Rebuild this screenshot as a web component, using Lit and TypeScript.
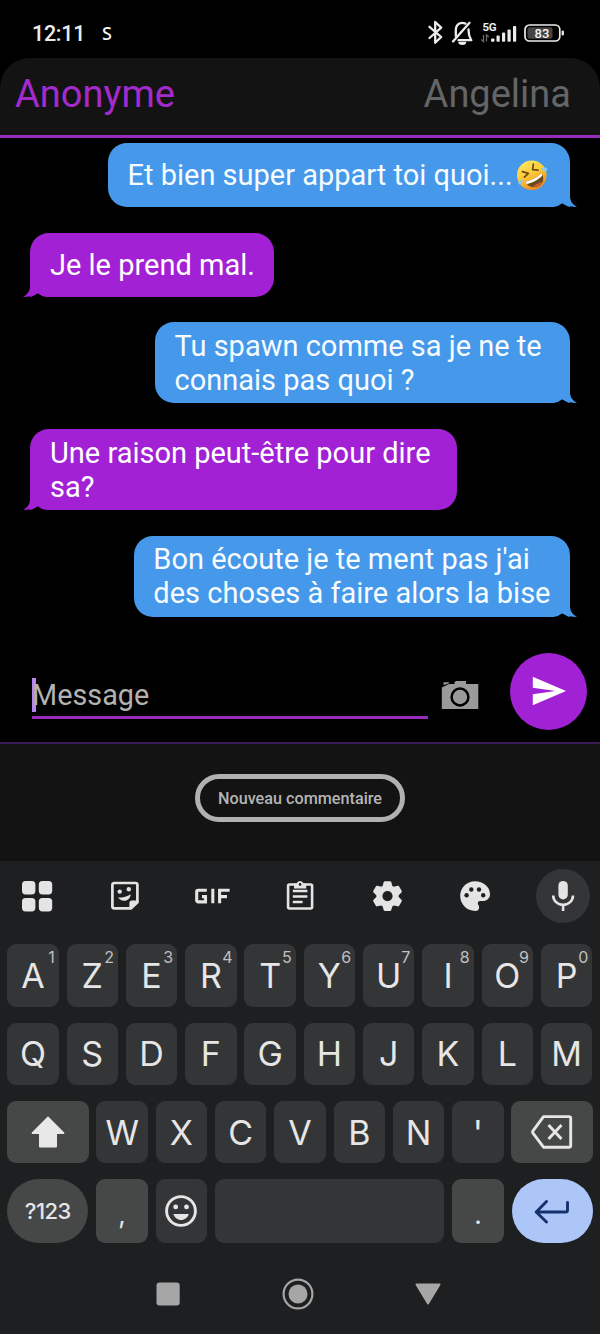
import { LitElement, html, css, svg, nothing } from "lit";
import { customElement, property } from "lit/decorators.js";

const emojiRofl = html`<svg class="emoji" viewBox="0 0 32 32" width="32" height="32" role="img" aria-label="rofl">
  <defs><linearGradient id="face" x1="0" y1="0" x2="0.5" y2="1">
    <stop offset="0" stop-color="#fff06a"/><stop offset="0.55" stop-color="#fcc938"/><stop offset="1" stop-color="#ef8e22"/>
  </linearGradient></defs>
  <circle cx="15.8" cy="16.2" r="14.8" fill="url(#face)"/>
  <path d="M6.4 12.6L12.4 14.4L8.4 18.2" fill="none" stroke="#6b4a12" stroke-width="1.7" stroke-linecap="round" stroke-linejoin="round"/>
  <path d="M17.4 5.2L16.6 10.6L22 11.2" fill="none" stroke="#6b4a12" stroke-width="1.7" stroke-linecap="round" stroke-linejoin="round"/>
  <path d="M9.6 22.8C15 21.8 22 17.6 25.4 14.2C29.2 19 27 25.6 21.6 27.6C16.4 29.4 11.2 27 9.6 22.8z" fill="#6b4a1c"/>
  <path d="M9.6 22.8C15 21.8 22 17.6 25.4 14.2C26 15.2 26.2 16.2 26.2 16.8C22.4 20.8 16.4 24 10.8 25C10.2 24.4 9.9 23.6 9.6 22.8z" fill="#fff"/>
  <path d="M17.4 28C18 26 23.4 23.4 26 23.6C24.8 26 21.4 28.2 17.4 28z" fill="#d8603a"/>
  <path d="M6.8 20.4C3.4 20.6 1.6 23 2.4 24.8C3.4 26.8 6.8 24.6 6.8 20.4z" fill="#8ccbee"/>
  <path d="M24.8 10C27.6 7.6 31 8.2 31.4 10.2C31.6 12.6 28 12.8 24.8 10z" fill="#8ccbee"/>
</svg>`;

@customElement("chat-bubble")
class ChatBubble extends LitElement {
  @property() side = "left";
  @property({ type: Number }) min = 0;
  @property({ type: Array }) lines: unknown[] = [];
  static styles = css`
    :host { display: flex; }
    :host([side="right"]) { justify-content: flex-end; }
    .bubble {
      position: relative; box-sizing: border-box; min-height: 64px; padding: 6.5px 19.5px 6.5px 20px;
      display: flex; flex-direction: column; justify-content: center;
      color: #fff; font: 29px/34px Roboto, sans-serif; white-space: nowrap;
    }
    .left { background: #a221d5; border-radius: 19px 19px 19px 0; }
    .right { background: #4598ea; border-radius: 19px 19px 0 19px; color: #f6fcff; padding-left: 19.5px; }
    .line { display: flex; align-items: center; height: 34px; }
    .tail { position: absolute; bottom: 0; width: 28px; height: 12px; }
    .right .tail { right: -7px; fill: #4598ea; }
    .left .tail { left: -7px; transform: scaleX(-1); fill: #a221d5; }
    .emoji { margin-left: 3px; }
  `;
  render() {
    return html`<div class="bubble ${this.side}" style="min-width:${this.min}px">
      ${this.lines.map((l) => html`<div class="line">${l}</div>`)}
      <svg class="tail" viewBox="0 0 28 12">
        <path d="M2 12.2Q9 12 13.3 8.3Q18 11.5 21.5 12.2z" fill="#000"/>
        <path d="M14 0H21V2.5Q22 9 28 12Q19.5 12 13.3 8.3z"/>
      </svg>
    </div>`;
  }
}

const toolIcons = [
  svg`<g fill="#e4e4e4"><rect x="7" y="7" width="13.4" height="13.4" rx="3.6"/><rect x="23.8" y="7" width="13.4" height="13.4" rx="3.6"/><rect x="7" y="24" width="13.4" height="13.4" rx="3.6"/><rect x="23.8" y="24" width="13.4" height="13.4" rx="3.6"/></g>`,
  svg`<path d="M34.4 28.2V10.8a1.8 1.8 0 0 0-1.8-1.8H11.2A1.8 1.8 0 0 0 9.4 10.8V32.6A1.8 1.8 0 0 0 11.2 34.4H28z" fill="none" stroke="#e4e4e4" stroke-width="2.7" stroke-linejoin="round"/>
      <path d="M26.4 35V29a2.5 2.5 0 0 1 2.5-2.5H35L35.5 28.5L28 35.5z" fill="#e4e4e4"/>
      <circle cx="16.7" cy="17.6" r="2.2" fill="#e4e4e4"/><circle cx="25.8" cy="15.3" r="2.2" fill="#e4e4e4"/>
      <path d="M15.2 23.6C19.4 23.8 24 22.7 27.7 20.2C27.2 27.8 17.8 28.6 15.2 23.6z" fill="#e4e4e4"/>`,
  svg`<path d="M16.8 16.2H8.2a1.5 1.5 0 0 0-1.5 1.5V26.4a1.5 1.5 0 0 0 1.5 1.5H15.5V22.6H12M22.8 14.8V29.2M29.6 29.2V16.2H39.6M29.6 22.6H37" fill="none" stroke="#e4e4e4" stroke-width="3.1"/>`,
  svg`<g fill="none" stroke="#e4e4e4" stroke-width="2.6" stroke-linejoin="round"><rect x="10.1" y="10.5" width="24" height="24" rx="1.4"/><path d="M14.8 17H29.4M14.8 22.5H29.4M14.8 28H24.6"/></g><path d="M16 9.5H18.6A3.6 3.6 0 0 1 25.5 9.5H28.2V14.4H16z" fill="#e4e4e4"/><circle cx="22.1" cy="10.4" r="1.3" fill="#1e1f21"/>`,
  svg`<g fill="#e4e4e4"><circle cx="21.5" cy="22.1" r="11"/>${[0, 60, 120, 180, 240, 300].map((a) => svg`<path d="M16.3 13L17.7 8.2Q18 7.2 19 7.2H24Q25 7.2 25.3 8.2L26.7 13z" transform="rotate(${a} 21.5 22.1)"/>`)}</g><circle cx="21.5" cy="22.1" r="5.1" fill="#1e1f21"/>`,
  svg`<path d="M22 7.3C13.6 7.3 7.2 13.8 7.2 22.1S13.8 37 22.3 37C24.7 37 26.1 35.5 26.1 33.5C26.1 31.2 24.8 30.7 24.8 29.2C24.8 27.9 25.8 27.1 27.2 27.1H29.8C34 27.1 37 24.2 37 20.3C37 12.9 30.3 7.3 22 7.3z" fill="#e4e4e4"/><g fill="#1e1f21"><circle cx="13.6" cy="21.3" r="2.2"/><circle cx="18.3" cy="15.5" r="2.2"/><circle cx="26" cy="15.5" r="2.2"/><circle cx="30.2" cy="21.3" r="2.2"/></g>`,
  svg`<rect x="17.4" y="6.9" width="9.4" height="18.6" rx="4.7" fill="#e4e4e4"/><path d="M12.2 21.5a9.9 9.4 0 0 0 19.8 0M22.1 30.8V37" fill="none" stroke="#e4e4e4" stroke-width="2.6"/>`,
];

@customElement("app-keyboard")
class AppKeyboard extends LitElement {
  static styles = css`
    :host { display: block; height: 472.5px; background: #1e1f21; color: #e6e6e6; }
    .tools { display: flex; justify-content: space-between; padding: 7.5px 10px 0; height: 54px; }
    .tool { width: 54px; height: 54px; border-radius: 50%; display: grid; place-items: center; }
    .tool:last-child { background: #343537; }
    .rows { display: flex; flex-direction: column; gap: 16px; padding: 21.5px 7.3px 0; }
    .row { display: flex; gap: 7.9px; height: 62.3px; }
    .row:last-child { height: 64px; }
    .key {
      position: relative; box-sizing: border-box; width: 51.4px; border-radius: 9px; background: #343537;
      display: flex; align-items: center; justify-content: center;
      font: 400 34px/40px Inter, sans-serif; padding-top: 1px;
    }
    .hint { position: absolute; top: 3px; right: 4px; font-size: 16px; line-height: 20px; color: #c0c0c0; }
    .side { flex: 1; width: auto; background: #464847; padding: 0; }
    .dark { background: #464847; }
    .space { flex: 1; }
    .round { border-radius: 32px; flex: none; width: 81.1px; }
    .sym { font: 500 22px/26px Inter, sans-serif; letter-spacing: -0.5px; }
    .enter { background: #adc6f8; }
    .punct { font-size: 26px; padding-top: 7px; }
    .icon { padding: 0; }
    .nav { display: flex; justify-content: center; gap: 98px; padding-top: 34.5px; padding-right: 4px; }
  `;
  key(c: string, hint?: string) {
    return html`<div class="key">${c}${hint ? html`<span class="hint">${hint}</span>` : nothing}</div>`;
  }
  render() {
    return html`
      <div class="tools">${toolIcons.map((i) => html`<div class="tool"><svg width="44" height="44" viewBox="0 0 44 44">${i}</svg></div>`)}</div>
      <div class="rows">
        <div class="row">${[..."AZERTYUIOP"].map((c, i) => this.key(c, String((i + 1) % 10)))}</div>
        <div class="row">${[..."QSDFGHJKLM"].map((c) => this.key(c))}</div>
        <div class="row">
          <div class="key side"><svg width="36" height="34" viewBox="0 0 36 34"><path d="M18 1.2L34.2 17.5Q34.8 19 33.5 19H27V31.5Q27 32.5 26 32.5H10Q9 32.5 9 31.5V19H2.5Q1.2 19 1.8 17.5z" fill="#e8e8e8"/></svg></div>
          ${[..."WXCVBN'"].map((c) => this.key(c))}
          <div class="key side"><svg width="42" height="34" viewBox="0 0 42 34"><g fill="none" stroke="#e6e6e6" stroke-width="2.9" stroke-linejoin="round"><path d="M12.5 1.6H38Q39.7 1.6 39.7 3.3V30.5Q39.7 32.2 38 32.2H12.5L2 18.2Q1.2 17 2 15.8z"/><path d="M17.5 10L30.5 24M30.5 10L17.5 24"/></g></svg></div>
        </div>
        <div class="row">
          <div class="key side round sym">?123</div>
          <div class="key dark punct">,</div>
          <div class="key icon"><svg width="34" height="34" viewBox="0 0 34 34"><circle cx="17" cy="17" r="14.4" fill="none" stroke="#e6e6e6" stroke-width="2.9"/><g fill="#e6e6e6"><circle cx="11.7" cy="12.9" r="2.4"/><circle cx="22.5" cy="12.9" r="2.4"/><path d="M9.3 20H24.9C23.6 23.6 20.8 26 17.1 26S10.6 23.6 9.3 20z"/></g></svg></div>
          <div class="key space"></div>
          <div class="key dark punct">.</div>
          <div class="key side round enter"><svg width="36" height="26" viewBox="0 0 36 26"><path d="M33.5 4.5V12.2Q33.5 14 31.7 14H2.5M12.5 3.5L2.2 14L12.5 24" fill="none" stroke="#17306e" stroke-width="2.9" stroke-linecap="round" stroke-linejoin="round"/></svg></div>
        </div>
      </div>
      <div class="nav">
        <svg width="32" height="32"><rect x="4.5" y="4.5" width="23.2" height="23" rx="3" fill="#a6a6a6"/></svg>
        <svg width="32" height="32"><circle cx="16" cy="16" r="14.4" fill="none" stroke="#a6a6a6" stroke-width="2.2"/><circle cx="16" cy="16" r="9.5" fill="#a6a6a6"/></svg>
        <svg width="32" height="32"><path d="M4.5 6.5H27.5L16 25.5z" fill="#a6a6a6" stroke="#a6a6a6" stroke-width="2" stroke-linejoin="round"/></svg>
      </div>`;
  }
}

@customElement("app-root")
class AppRoot extends LitElement {
  static styles = css`
    :host { display: flex; flex-direction: column; width: 600px; height: 1334px; overflow: hidden; background: #000; font-family: Roboto, sans-serif; }
    .status { display: flex; box-sizing: border-box; height: 58px; padding: 8px 34px 0 32px; align-items: center; color: #ececec; }
    .time { font-size: 21.5px; font-weight: 500; letter-spacing: -0.3px; }
    .s { font: 500 18px "Noto Sans", sans-serif; color: #f6f6f6; margin-left: 17px; flex: 1; }
    .header { display: flex; box-sizing: border-box; justify-content: space-between; height: 80.3px; padding: 13px 29px 0 15px; background: #131313; border-bottom: 3.5px solid #982cbd; border-radius: 30px 30px 0 0; font-size: 38px; line-height: 46px; }
    .me { color: #a32bce; }
    .other { color: #636566; }
    .chat { display: flex; flex-direction: column; gap: 25.7px; padding: 4.7px 30px 0; height: 505px; box-sizing: border-box; }
    .compose { display: flex; box-sizing: border-box; height: 100.7px; padding: 9.5px 13px 0 32px; border-bottom: 2px solid #3a1b56; }
    .field { box-sizing: border-box; width: 395.5px; height: 66px; padding-top: 25px; border-bottom: 3.2px solid #982cb9; display: flex; color: #b2b2b2; font-size: 28.8px; line-height: 34px; }
    .caret { width: 3.5px; height: 34px; background: #b487ef; margin-right: -3.5px; }
    .cam { margin: 27px 0 0 13px; }
    .send { width: 77px; height: 77px; margin-left: auto; border-radius: 50%; background: #a121d4; display: grid; place-items: center; }
    .comment { height: 117.5px; background: #131313; display: flex; align-items: flex-start; justify-content: center; }
    .pill { box-sizing: border-box; margin-top: 30px; width: 210.5px; height: 48.5px; border: 5px solid #b1b1b1; border-radius: 25px; color: #b5b5b5; font-size: 16.2px; font-weight: 500; line-height: 39px; text-align: center; }
  `;
  render() {
    return html`
      <div class="status">
        <span class="time">12:11</span><span class="s">S</span>
        <svg width="140" height="30" viewBox="0 0 140 30">
          <g fill="none" stroke="#ececec" stroke-width="2.3" stroke-linejoin="round" stroke-linecap="round">
            <path d="M3.5 8.8L15.2 19L9.2 24.7V4L15.2 9.7L3.5 20"/>
            <path d="M27 23.5L43.5 4.8"/>
            <path d="M29.8 18V12.5C29.8 4.5 36 4 39.5 5.6M42.5 11.5C42.5 18 43.5 19 45.3 22.2H32.5"/>
          </g>
          <path d="M32.3 23.8H40.3A4 3.2 0 0 1 32.3 23.8z" fill="#ececec"/>
          <text x="56.5" y="13.3" fill="#ececec" font-family="Roboto, sans-serif" font-size="11.5" font-weight="700" textLength="14">5G</text>
          <g stroke="#6a6a6a" stroke-width="1.3" fill="none"><path d="M57.5 17V23.5L55.2 21.5M60.5 23.5V17L62.8 19"/></g>
          <g fill="#ececec"><rect x="65" y="20.5" width="3.5" height="3.2" rx="1"/><rect x="70.5" y="17.5" width="3.2" height="6.2" rx="1"/><rect x="76" y="14.5" width="3.2" height="9.2" rx="1"/><rect x="81.5" y="11.5" width="3.2" height="12.2" rx="1"/><rect x="87" y="8" width="3.2" height="15.7" rx="1"/></g>
          <rect x="99" y="7" width="34.8" height="16" rx="4.5" fill="none" stroke="#ececec" stroke-width="1.7"/>
          <rect x="101.5" y="9.3" width="25" height="11.4" rx="2" fill="#444"/>
          <rect x="135.6" y="12.6" width="2.3" height="5" rx="1" fill="#ececec"/>
          <text x="108.5" y="19.7" fill="#f4f4f4" font-family="Roboto, sans-serif" font-size="13" font-weight="500" textLength="15">83</text>
        </svg>
      </div>
      <div class="header"><span class="me">Anonyme</span><span class="other">Angelina</span></div>
      <div class="chat">
        <chat-bubble side="right" min="462" .lines=${[html`Et bien super appart toi quoi...${emojiRofl}`]}></chat-bubble>
        <chat-bubble side="left" .lines=${["Je le prend mal."]}></chat-bubble>
        <chat-bubble side="right" min="415" .lines=${["Tu spawn comme sa je ne te", "connais pas quoi ?"]}></chat-bubble>
        <chat-bubble side="left" min="427" .lines=${["Une raison peut-être pour dire", "sa?"]}></chat-bubble>
        <chat-bubble side="right" .lines=${["Bon écoute je te ment pas j'ai", "des choses à faire alors la bise"]}></chat-bubble>
      </div>
      <div class="compose">
        <div class="field"><span class="caret"></span><span>Message</span></div>
        <svg class="cam" width="38" height="32" viewBox="0 0 38 32"><path d="M0.8 7.5L8 4H13.5V2.2L15 1H25V4H37.3V29H0.8z" fill="#9a9a9a"/><path d="M2.5 2.2H8.3L7.5 3.5L2.5 5z" fill="#9a9a9a"/><circle cx="19" cy="17" r="8.4" fill="none" stroke="#000" stroke-width="2.5"/></svg>
        <div class="send"><svg width="36" height="30" viewBox="0 0 36 30"><path d="M1.8 0.8L35 15L1.8 29.3V18.3L24.5 15L1.8 11.8z" fill="#fff"/></svg></div>
      </div>
      <div class="comment"><div class="pill">Nouveau commentaire</div></div>
      <app-keyboard></app-keyboard>`;
  }
}
